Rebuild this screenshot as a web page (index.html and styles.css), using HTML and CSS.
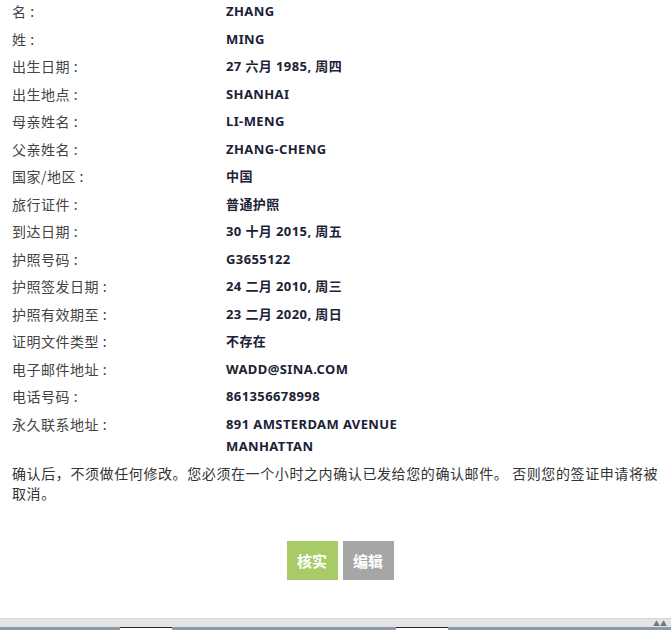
FILE: index.html
```html
<!DOCTYPE html>
<html lang="zh">

<head>
    <meta charset="UTF-8">
    <meta name="viewport" content="width=device-width, initial-scale=1.0">
    <title>确认</title>
    <link rel="stylesheet" href="styles.css">
</head>

<body>
    <div class="page">
        <dl class="info">
            <div class="row"><dt>名 :</dt><dd>ZHANG</dd></div>
            <div class="row"><dt>姓 :</dt><dd>MING</dd></div>
            <div class="row"><dt>出生日期 :</dt><dd>27 六月 1985, 周四</dd></div>
            <div class="row"><dt>出生地点 :</dt><dd>SHANHAI</dd></div>
            <div class="row"><dt>母亲姓名 :</dt><dd>LI-MENG</dd></div>
            <div class="row"><dt>父亲姓名 :</dt><dd>ZHANG-CHENG</dd></div>
            <div class="row"><dt>国家/地区 :</dt><dd>中国</dd></div>
            <div class="row"><dt>旅行证件 :</dt><dd>普通护照</dd></div>
            <div class="row"><dt>到达日期 :</dt><dd>30 十月 2015, 周五</dd></div>
            <div class="row"><dt>护照号码 :</dt><dd>G3655122</dd></div>
            <div class="row"><dt>护照签发日期 :</dt><dd>24 二月 2010, 周三</dd></div>
            <div class="row"><dt>护照有效期至 :</dt><dd>23 二月 2020, 周日</dd></div>
            <div class="row"><dt>证明文件类型 :</dt><dd>不存在</dd></div>
            <div class="row"><dt>电子邮件地址 :</dt><dd>WADD@SINA.COM</dd></div>
            <div class="row"><dt>电话号码 :</dt><dd>861356678998</dd></div>
            <div class="row"><dt>永久联系地址 :</dt><dd>891 AMSTERDAM AVENUE<br>MANHATTAN</dd></div>
        </dl>

        <p class="note">确认后，不须做任何修改。您必须在一个小时之内确认已发给您的确认邮件。 否则您的签证申请将被取消。</p>

        <div class="actions">
            <button class="btn btn-ok">核实</button>
            <button class="btn btn-edit">编辑</button>
        </div>
    </div>

    <div class="statusbar">
        <span class="tab tab-1"></span>
        <span class="tab tab-2"></span>
        <span class="arrows">▲▲</span>
    </div>
</body>

</html>
```

FILE: styles.css
```css
html,
body {
    margin: 0;
    padding: 0;
    background: #fff;
}

body {
    font-family: "Noto Sans", "Noto Sans CJK SC", sans-serif;
    min-height: 630px;
    display: flex;
    flex-direction: column;
}

.page {
    flex: 1;
    padding: 0 9px 0 12px;
}

.info {
    margin: 0;
}

.row {
    display: grid;
    grid-template-columns: 214px 1fr;
    padding-bottom: 5.5px;
}

dt {
    font-family: "Noto Sans CJK SC", sans-serif;
    font-size: 14px;
    line-height: 22px;
    color: #444;
    letter-spacing: .5px;
}

dd {
    margin: 0;
    font-family: "Noto Sans", "Noto Sans CJK SC", sans-serif;
    font-size: 13px;
    font-weight: bold;
    line-height: 22px;
    color: #1b2236;
    letter-spacing: .4px;
}

.note {
    margin: 1px 0 0;
    font-family: "Noto Sans CJK SC", sans-serif;
    font-size: 14px;
    line-height: 20px;
    letter-spacing: .6px;
    color: #333;
}

.actions {
    display: flex;
    justify-content: center;
    gap: 5px;
    margin-top: 38px;
    padding-left: 6px;
}

.btn {
    border: 0;
    width: 51px;
    height: 39px;
    color: #fff;
    font-family: "Noto Sans CJK SC", sans-serif;
    font-size: 15px;
    font-weight: bold;
    cursor: pointer;
}

.btn-ok {
    background: #a8cb67;
}

.btn-edit {
    background: #a6a6a6;
}

.statusbar {
    position: relative;
    height: 11px;
    background: #e4e4e4;
    border-top: 1px solid #d6d6d6;
    box-shadow: inset 0 -3px 0 #8e9aa8;
}

.tab {
    position: absolute;
    bottom: 0;
    height: 2px;
    width: 52px;
    background: #fff;
    border-top: 1px solid #222;
}

.tab-1 {
    left: 120px;
}

.tab-2 {
    left: 396px;
}

.arrows {
    position: absolute;
    right: 4px;
    top: 0;
    font-size: 7px;
    line-height: 9px;
    color: #777;
}
```
